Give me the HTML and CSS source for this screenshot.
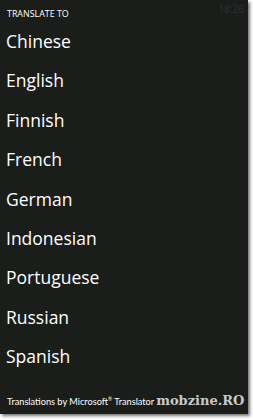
FILE: index.html
```html
<!DOCTYPE html>
<html>
<head>
<meta charset="utf-8">
<link rel="stylesheet" href="styles.css">
</head>
<body>
<div class="frame">
  <div class="screen">
    <div class="top">
      <div class="title">TRANSLATE TO</div>
      <div class="clock">18:26</div>
    </div>
    <ul class="langs">
      <li>Chinese</li>
      <li>English</li>
      <li>Finnish</li>
      <li>French</li>
      <li>German</li>
      <li>Indonesian</li>
      <li>Portuguese</li>
      <li>Russian</li>
      <li>Spanish</li>
    </ul>
    <div class="footer">
      <span class="credit">Translations by Microsoft<sup>®</sup> Translator</span>
      <span class="mark">mobzine.RO</span>
    </div>
  </div>
</div>
</body>
</html>
```
FILE: styles.css
```css
html, body {
  margin: 0;
  padding: 0;
  background: #ffffff;
}
.frame {
  width: 253px;
  height: 419px;
  overflow: hidden;
}
.screen {
  width: 248px;
  height: 414px;
  background: #1b1d1a;
  box-shadow: 2px 2px 3px rgba(0,0,0,0.55);
  color: #ffffff;
  font-family: "Open Sans", "Noto Sans", sans-serif;
  display: flex;
  flex-direction: column;
}
.top {
  display: flex;
  justify-content: space-between;
  align-items: flex-start;
  height: 26px;
}
.title {
  font-size: 8.9px;
  margin: 7px 0 0 7px;
}
.clock {
  font-size: 10px;
  color: #2e312d;
  margin: 2px 4px 0 0;
}
.langs {
  list-style: none;
  margin: 0;
  padding: 0 0 0 6px;
}
.langs li {
  font-size: 17.5px;
  height: 39.4px;
  line-height: 31px;
}
.footer {
  margin-top: auto;
  display: flex;
  align-items: baseline;
  white-space: nowrap;
  padding: 0 0 6px 7px;
}
.credit {
  font-family: "Lato", "Open Sans", sans-serif;
  font-size: 9.2px;
}
.credit sup {
  font-size: 5px;
}
.mark {
  font-family: "DejaVu Serif", serif;
  font-weight: bold;
  font-size: 13px;
  color: #c9c9c9;
  margin-left: 2px;
}
```
